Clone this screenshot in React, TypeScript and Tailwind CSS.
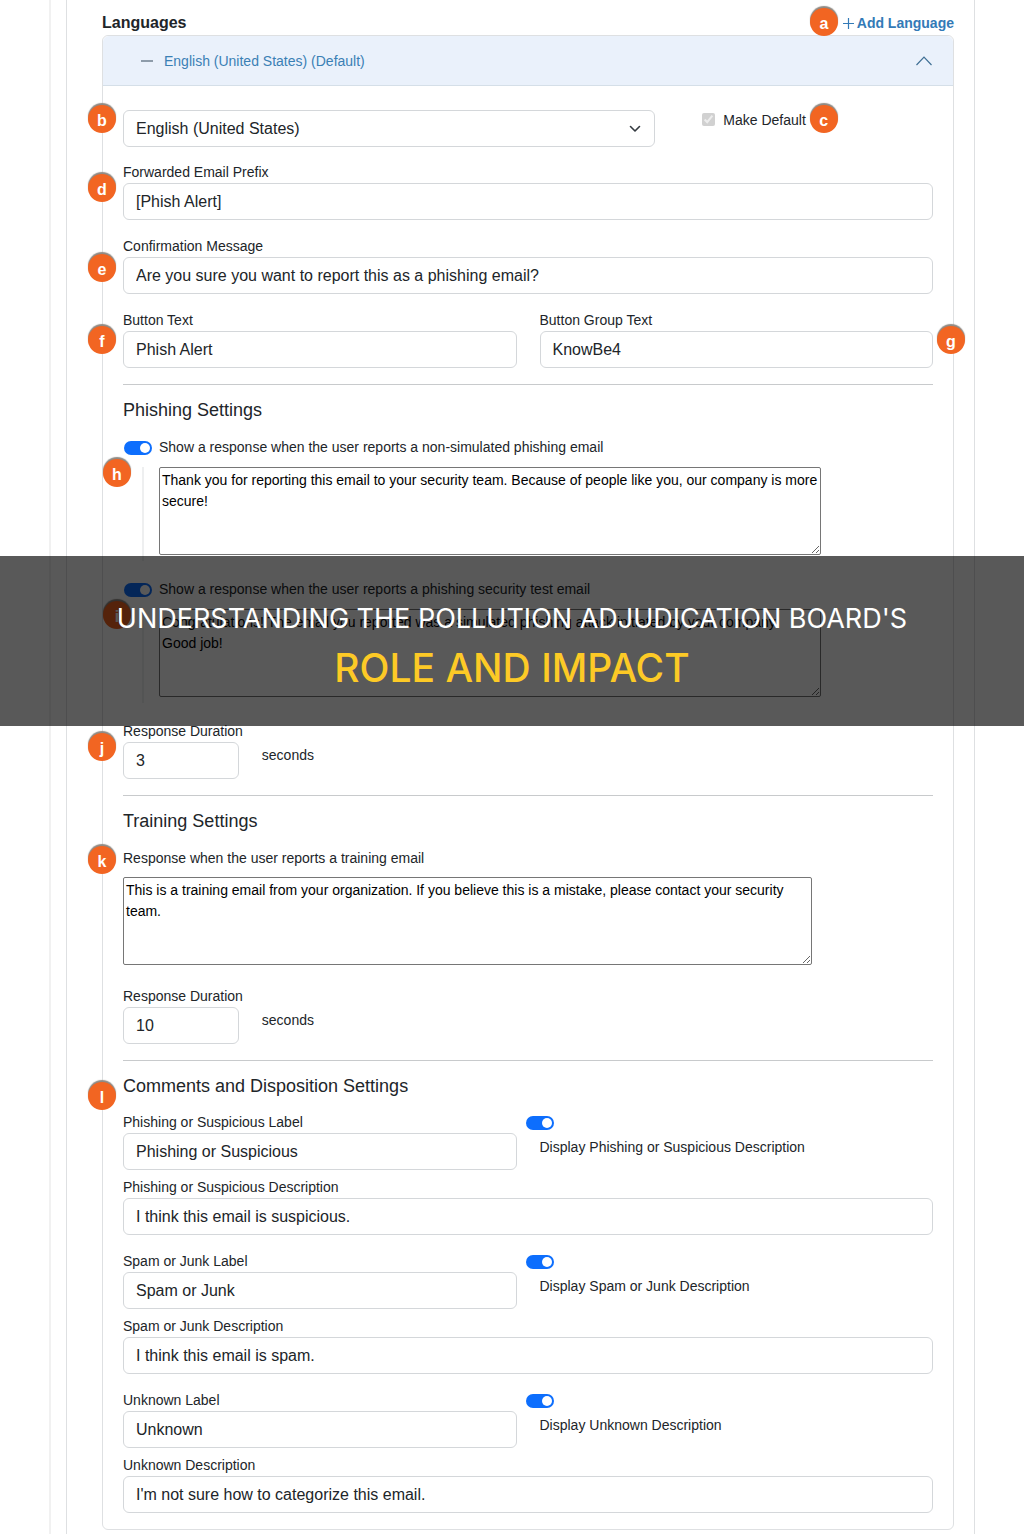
import React from "react";

const Badge: React.FC<{ letter: string; className: string }> = ({ letter, className }) => (
  <span
    className={`absolute z-10 flex h-7 w-7 items-center justify-center rounded-full bg-[#f26522] pt-1 text-base leading-6 font-bold text-white shadow-[0_-2px_1px_#8f8a84] ${className}`}
  >
    {letter}
  </span>
);

const inputClass =
  "block h-[37px] w-full rounded-md border border-[#d4d7da] bg-white px-3 text-base text-[#212529]";

const textareaClass =
  "block h-[88px] resize rounded-xs border border-[#767676] bg-white py-0.5 pl-0.5 text-sm leading-[21px] text-black";

interface FieldProps {
  id: string;
  label: string;
  value: string;
  className?: string;
  children?: React.ReactNode;
}

const Field: React.FC<FieldProps> = ({ id, label, value, className = "", children }) => (
  <div className={`relative ${className}`}>
    {children}
    <label htmlFor={id} className="block leading-[21px]">
      {label}
    </label>
    <input id={id} type="text" defaultValue={value} className={inputClass} />
  </div>
);

const Toggle: React.FC<{ id: string; className?: string }> = ({ id, className = "" }) => (
  <span className={`relative inline-flex h-3.5 w-7 shrink-0 ${className}`}>
    <input
      id={id}
      type="checkbox"
      role="switch"
      defaultChecked
      className="peer h-3.5 w-7 appearance-none rounded-full bg-gray-300 checked:bg-[#0d6efd]"
    />
    <span className="pointer-events-none absolute top-0.5 left-0.5 h-2.5 w-2.5 rounded-full bg-white peer-checked:left-4" />
  </span>
);

const Divider = () => <hr className="mt-4 border-[#c8cacc]" />;

const SectionTitle: React.FC<{ children: React.ReactNode }> = ({ children }) => (
  <h2 className="mt-[13px] text-lg leading-6">{children}</h2>
);

const Duration: React.FC<{ id: string; value: string; className: string; children?: React.ReactNode }> = ({
  id,
  value,
  className,
  children,
}) => (
  <div className={`relative grid grid-cols-6 gap-[23px] ${className}`}>
    {children}
    <div>
      <label htmlFor={id} className="block leading-[21px] whitespace-nowrap">
        Response Duration
      </label>
      <input id={id} type="text" defaultValue={value} className={inputClass} />
    </div>
    <span className="pt-6 leading-[21px]">seconds</span>
  </div>
);

const responses = [
  {
    id: "non-simulated",
    badge: "h",
    label: "Show a response when the user reports a non-simulated phishing email",
    text: "Thank you for reporting this email to your security team. Because of people like you, our company is more secure!",
    className: "mt-[15px]",
  },
  {
    id: "security-test",
    badge: "i",
    label: "Show a response when the user reports a phishing security test email",
    text: "Congratulations! The email you reported was a simulated phishing attack initiated by your company.\nGood job!",
    className: "mt-6",
  },
];

const dispositions = [
  { id: "phishing", name: "Phishing or Suspicious", description: "I think this email is suspicious." },
  { id: "spam", name: "Spam or Junk", description: "I think this email is spam." },
  { id: "unknown", name: "Unknown", description: "I'm not sure how to categorize this email." },
];

const App: React.FC = () => {
  return (
    <div className="relative min-h-screen overflow-hidden bg-white font-['Liberation_Sans',Arial,sans-serif] text-sm text-[#212529]">
      <div className="ml-[49px] border-l-2 border-[#f1f1f1] pr-[49px] pl-[15px]">
        <main className="border-x border-[#dee0e2] pr-5 pb-1 pl-[35px]">
          <div className="relative flex h-[35px] items-end justify-between">
            <h1 className="text-base leading-6 font-bold">Languages</h1>
            <Badge letter="a" className="top-2 right-[116px]" />
            <button type="button" className="flex items-center gap-[3px] leading-6 font-bold text-[#337ab7]">
              <svg width="11" height="11" viewBox="0 0 11 11" stroke="currentColor" strokeWidth="1.2">
                <path d="M5.5 0v11M0 5.5h11" />
              </svg>
              Add Language
            </button>
          </div>

          <section className="rounded-md border border-[#dee0e2]">
            <button
              type="button"
              className="flex h-[50px] w-full items-center rounded-t-md border-b border-[#d5dfe8] bg-[#eaf1fb] pr-[21px] pl-[38px] text-[#3a80b5]"
            >
              <svg width="12" height="2" viewBox="0 0 12 2" className="mr-[11px]">
                <path d="M0 1h12" stroke="#5c6f7e" strokeWidth="1.3" />
              </svg>
              English (United States) (Default)
              <svg width="16" height="10" viewBox="0 0 16 10" fill="none" className="ml-auto">
                <path d="M0.5 9L8 1.2L15.5 9" stroke="#3f6f94" strokeWidth="1.2" />
              </svg>
            </button>

            <div className="px-5 pt-6 pb-4">
              <div className="relative grid grid-cols-3 gap-[23px]">
                <Badge letter="b" className="-top-[5px] -left-[35px]" />
                <div className="relative col-span-2">
                  <select aria-label="Language" className={`${inputClass} appearance-none`}>
                    <option>English (United States)</option>
                  </select>
                  <svg width="12" height="8" viewBox="0 0 12 8" fill="none" className="pointer-events-none absolute top-[15px] right-3.5">
                    <path d="M1.5 1.5L6 6L10.5 1.5" stroke="#343a40" strokeWidth="1.6" strokeLinecap="round" strokeLinejoin="round" />
                  </svg>
                </div>
                <div className="flex items-start pl-6 leading-[21px]">
                  <input id="make-default" type="checkbox" defaultChecked disabled className="mt-[3px] h-[13px] w-[13px]" />
                  <label htmlFor="make-default" className="relative pl-2">
                    Make Default
                    <Badge letter="c" className="-top-[5px] -right-8" />
                  </label>
                </div>
              </div>

              <Field id="prefix" label="Forwarded Email Prefix" value="[Phish Alert]" className="mt-[15px]">
                <Badge letter="d" className="top-3 -left-[35px]" />
              </Field>
              <Field
                id="confirmation"
                label="Confirmation Message"
                value="Are you sure you want to report this as a phishing email?"
                className="mt-4"
              >
                <Badge letter="e" className="top-[18px] -left-[35px]" />
              </Field>
              <div className="mt-4 grid grid-cols-2 gap-[23px]">
                <Field id="button-text" label="Button Text" value="Phish Alert">
                  <Badge letter="f" className="top-4 -left-[35px]" />
                </Field>
                <Field id="group-text" label="Button Group Text" value="KnowBe4">
                  <Badge letter="g" className="top-4 -right-8" />
                </Field>
              </div>

              <Divider />
              <SectionTitle>Phishing Settings</SectionTitle>
              {responses.map((response) => (
                <div key={response.id} className={response.className}>
                  <div className="flex items-center gap-[7px] pl-px leading-[21px]">
                    <Toggle id={response.id} />
                    <label htmlFor={response.id}>{response.label}</label>
                  </div>
                  <div className="relative mt-[9px] pl-9">
                    <Badge letter={response.badge} className="-top-2 -left-5" />
                    <span className="absolute top-0 left-[19px] h-[94px] w-0.5 bg-[#eeeff0]" />
                    <textarea
                      aria-label={response.label}
                      defaultValue={response.text}
                      className={`${textareaClass} w-[85.5%]`}
                    />
                  </div>
                </div>
              ))}
              <Duration id="phishing-duration" value="3" className="mt-6">
                <Badge letter="j" className="top-3 -left-[35px]" />
              </Duration>

              <Divider />
              <SectionTitle>Training Settings</SectionTitle>
              <div className="relative mt-[15px]">
                <Badge letter="k" className="-top-0.5 -left-[35px]" />
                <label htmlFor="training" className="block leading-[21px]">
                  Response when the user reports a training email
                </label>
                <textarea
                  id="training"
                  defaultValue="This is a training email from your organization. If you believe this is a mistake, please contact your security team."
                  className={`${textareaClass} mt-2 w-[85%]`}
                />
              </div>
              <Duration id="training-duration" value="10" className="mt-[21px]" />

              <Divider />
              <div className="relative">
                <Badge letter="l" className="top-2 -left-[35px]" />
                <SectionTitle>Comments and Disposition Settings</SectionTitle>
              </div>
              <div className="mt-[14px] space-y-4">
                {dispositions.map((item) => (
                  <div key={item.id}>
                    <div className="grid grid-cols-2 gap-[23px]">
                      <Field id={`${item.id}-label`} label={`${item.name} Label`} value={item.name} />
                      <div className="flex flex-col pt-1">
                        <Toggle id={`${item.id}-display`} className="-ml-3.5" />
                        <label htmlFor={`${item.id}-display`} className="mt-[7px] leading-[21px]">
                          Display {item.name} Description
                        </label>
                      </div>
                    </div>
                    <Field
                      id={`${item.id}-description`}
                      label={`${item.name} Description`}
                      value={item.description}
                      className="mt-[7px]"
                    />
                  </div>
                ))}
              </div>
            </div>
          </section>
        </main>
      </div>

      <div className="absolute inset-x-0 top-[556px] z-20 flex h-[170px] flex-col items-center justify-center bg-black/65 pt-2 text-center font-[Inter,sans-serif]">
        <p className="text-[27px] leading-[46px] text-white">UNDERSTANDING THE POLLUTION ADJUDICATION BOARD'S</p>
        <p className="text-[39px] leading-[52px] font-medium text-[#fdca26]">ROLE AND IMPACT</p>
      </div>
    </div>
  );
};

export default App;
